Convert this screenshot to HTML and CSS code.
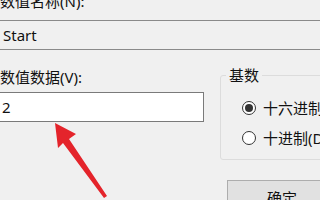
FILE: index.html
```html
<!DOCTYPE html>
<html lang="zh-CN">
<head>
<meta charset="utf-8">
<title>编辑值</title>
<link rel="stylesheet" href="styles.css">
</head>
<body>
<div class="dialog">
  <div class="label">数值名称(N):</div>
  <div class="field readonly">Start</div>
  <div class="row">
    <div class="col-left">
      <div class="label label-data">数值数据(V):</div>
      <div class="field edit">2</div>
    </div>
    <div class="col-right">
      <fieldset class="group">
        <legend>基数</legend>
        <div class="radio-row"><span class="radio checked"></span><span>十六进制(H)</span></div>
        <div class="radio-row"><span class="radio"></span><span>十进制(D)</span></div>
      </fieldset>
      <div class="button">确定</div>
    </div>
  </div>
</div>
<svg class="arrow" width="320" height="200" viewBox="0 0 320 200" aria-hidden="true">
  <polygon points="55,123 76,134 69,139 107,196 104,198 63,143 58,148" fill="#e4242b"/>
</svg>
</body>
</html>
```

FILE: styles.css
```css
html, body {
  margin: 0;
  padding: 0;
  background: #f0f0f0;
  overflow: hidden;
  width: 320px;
  height: 200px;
}
body {
  position: relative;
  font-family: "Noto Sans", "Noto Sans CJK SC", sans-serif;
  font-size: 15px;
  line-height: 20px;
  color: #111;
}
.dialog {
  width: 460px;
  margin-top: -9px;
  margin-left: -10px;
}
.label {
  padding-left: 10px;
  height: 20px;
  white-space: nowrap;
}
.field {
  box-sizing: border-box;
  height: 30px;
  border: 1px solid #7a7a7a;
  display: flex;
  align-items: center;
  white-space: nowrap;
}
.readonly {
  margin-top: 9px;
  width: 440px;
  padding-left: 12px;
  background: #f0f0f0;
  border-color: #8a8a8a;
}
.row {
  display: flex;
  gap: 16px;
  margin-top: 17px;
}
.col-left {
  width: 214px;
  flex: none;
}
.label-data {
  height: 20px;
}
.edit {
  margin-top: 5px;
  background: #fff;
  padding-left: 11px;
}
.col-right {
  margin-top: -2px;
  display: flex;
  flex-direction: column;
  align-items: flex-start;
}
.group {
  margin: 0;
  width: 180px;
  border: 1px solid #dcdcdc;
  border-radius: 3px;
  padding: 0 8px 11px 5px;
  min-width: 0;
}
.group legend {
  padding: 0 3px;
  line-height: 20px;
}
.radio-row {
  display: flex;
  align-items: center;
  gap: 7px;
  height: 20px;
  margin-left: 16px;
  margin-top: 13px;
  white-space: nowrap;
}
.radio-row + .radio-row {
  margin-top: 10px;
}
.radio {
  box-sizing: border-box;
  width: 14px;
  height: 14px;
  border: 1px solid #333;
  border-radius: 50%;
  background: #fff;
  display: flex;
  align-items: center;
  justify-content: center;
  flex: none;
}
.radio.checked::after {
  content: "";
  width: 8px;
  height: 8px;
  border-radius: 50%;
  background: #333;
}
.button {
  box-sizing: border-box;
  margin-top: 20px;
  margin-left: 7px;
  width: 110px;
  height: 30px;
  padding-top: 7px;
  text-align: center;
  background: #e1e1e1;
  border: 1px solid #adadad;
}
.arrow {
  position: absolute;
  left: 0;
  top: 0;
  pointer-events: none;
}
```
